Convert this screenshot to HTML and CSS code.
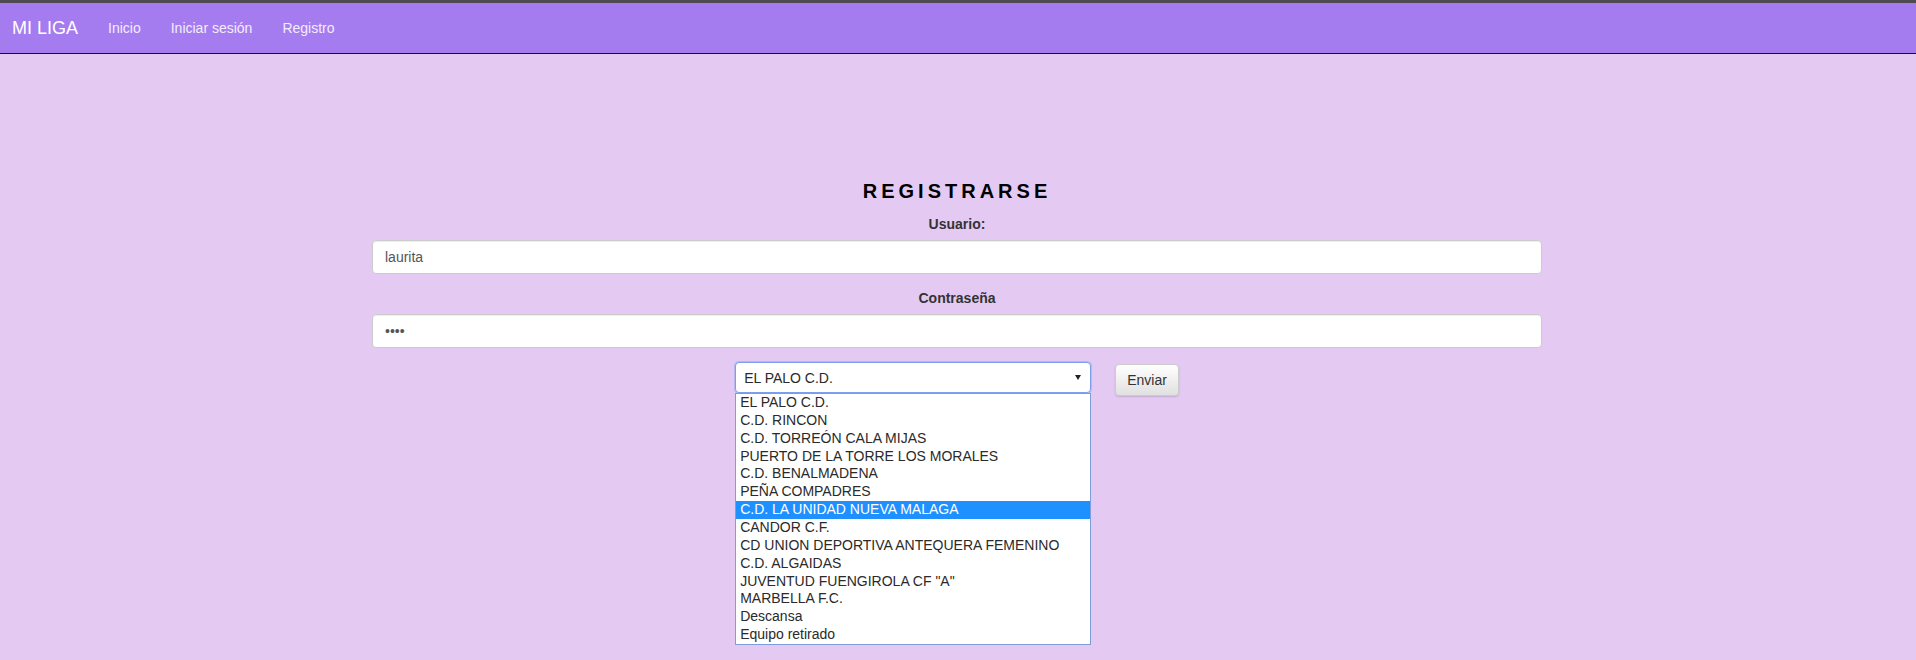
FILE: index.html
```html
<!DOCTYPE html>
<html lang="es">
<head>
<meta charset="utf-8">
<title>MI LIGA - Registro</title>
<link rel="stylesheet" href="styles.css">
</head>
<body>
<div class="topstrip"></div>
<nav class="navbar">
  <a class="brand" href="#">MI LIGA</a>
  <ul class="nav">
    <li><a href="#">Inicio</a></li>
    <li><a href="#">Iniciar sesión</a></li>
    <li><a href="#">Registro</a></li>
  </ul>
</nav>
<main class="container">
  <h2 class="title">REGISTRARSE</h2>
  <form class="form">
    <div class="group">
      <label class="label" for="usuario">Usuario:</label>
      <input class="input" id="usuario" type="text" value="laurita">
    </div>
    <div class="group">
      <label class="label" for="pass">Contraseña</label>
      <input class="input" id="pass" type="password" value="abcd">
    </div>
    <div class="actions">
      <div class="select-wrap">
        <div class="select"><span>EL PALO C.D.</span><span class="arrow"></span></div>
        <ul class="dropdown">
          <li>EL PALO C.D.</li>
          <li>C.D. RINCON</li>
          <li>C.D. TORREÓN CALA MIJAS</li>
          <li>PUERTO DE LA TORRE LOS MORALES</li>
          <li>C.D. BENALMADENA</li>
          <li>PEÑA COMPADRES</li>
          <li class="active">C.D. LA UNIDAD NUEVA MALAGA</li>
          <li>CANDOR C.F.</li>
          <li>CD UNION DEPORTIVA ANTEQUERA FEMENINO</li>
          <li>C.D. ALGAIDAS</li>
          <li>JUVENTUD FUENGIROLA CF "A"</li>
          <li>MARBELLA F.C.</li>
          <li>Descansa</li>
          <li>Equipo retirado</li>
        </ul>
      </div>
      <button class="btn" type="button">Enviar</button>
    </div>
  </form>
</main>
</body>
</html>
```
FILE: styles.css
```css
html, body {
  margin: 0;
  padding: 0;
}
body {
  background: #e4caf3;
  font-family: "Liberation Sans", Arial, sans-serif;
  font-size: 14px;
  color: #333;
  min-height: 660px;
}
.topstrip {
  height: 3px;
  background: #4f4b52;
}
.navbar {
  display: flex;
  align-items: center;
  height: 50px;
  background: #a57cf0;
  border-bottom: 1px solid #111;
  padding-left: 12px;
}
.brand {
  font-size: 18px;
  line-height: 20px;
  color: #fff;
  text-decoration: none;
  padding-right: 15px;
}
.nav {
  display: flex;
  list-style: none;
  margin: 0;
  padding: 0;
}
.nav a {
  display: block;
  padding: 0 15px;
  font-size: 14px;
  line-height: 20px;
  color: #f3ecfc;
  text-decoration: none;
}
.container {
  width: 1170px;
  margin: 0 auto;
  padding-top: 126px;
  padding-right: 2px;
}
.title {
  margin: 0 0 12px;
  text-align: center;
  font-size: 20px;
  line-height: 22px;
  font-weight: bold;
  letter-spacing: 4px;
  color: #000;
}
.group {
  margin-bottom: 14px;
}
.label {
  display: block;
  text-align: center;
  font-weight: bold;
  font-size: 14px;
  line-height: 20px;
  margin-bottom: 6px;
  color: #333;
}
.input {
  display: block;
  box-sizing: border-box;
  width: 100%;
  height: 34px;
  padding: 6px 12px;
  font-family: "Liberation Sans", Arial, sans-serif;
  font-size: 14px;
  color: #555;
  background: #fff;
  border: 1px solid #ccc;
  border-radius: 4px;
  box-shadow: inset 0 1px 1px rgba(0, 0, 0, 0.075);
  outline: none;
}
.actions {
  display: flex;
  justify-content: center;
  align-items: flex-start;
  gap: 24px;
}
.select-wrap {
  position: relative;
  width: 356px;
}
.select {
  box-sizing: border-box;
  height: 31px;
  display: flex;
  align-items: center;
  justify-content: space-between;
  padding: 0 9px 0 8px;
  background: #fff;
  border: 1px solid #7e9ff0;
  box-shadow: 0 0 0 1px rgba(126, 159, 240, 0.45);
  border-radius: 4px;
  font-size: 14px;
  color: #2a2a2a;
}
.arrow {
  width: 0;
  height: 0;
  border-left: 3.5px solid transparent;
  border-right: 3.5px solid transparent;
  border-top: 5px solid #222;
}
.dropdown {
  position: absolute;
  top: 100%;
  left: 0;
  right: 0;
  margin: 0;
  padding: 0;
  list-style: none;
  background: #fff;
  border: 1px solid #7f9ddb;
  z-index: 10;
}
.dropdown li {
  height: 17.86px;
  line-height: 17.86px;
  padding-left: 4px;
  font-size: 14px;
  color: #2a2a2a;
  white-space: nowrap;
}
.dropdown li.active {
  background: #1e90ff;
  color: #fff;
}
.btn {
  margin-top: 2px;
  height: 32px;
  padding: 0 11px;
  font-family: "Liberation Sans", Arial, sans-serif;
  font-size: 14px;
  color: #333;
  background: linear-gradient(to bottom, #ffffff 0%, #e0e0e0 100%);
  border: 1px solid #ccc;
  border-radius: 4px;
  box-shadow: 0 1px 2px rgba(0, 0, 0, 0.15), inset 0 1px 0 rgba(255, 255, 255, 0.15);
}
```
